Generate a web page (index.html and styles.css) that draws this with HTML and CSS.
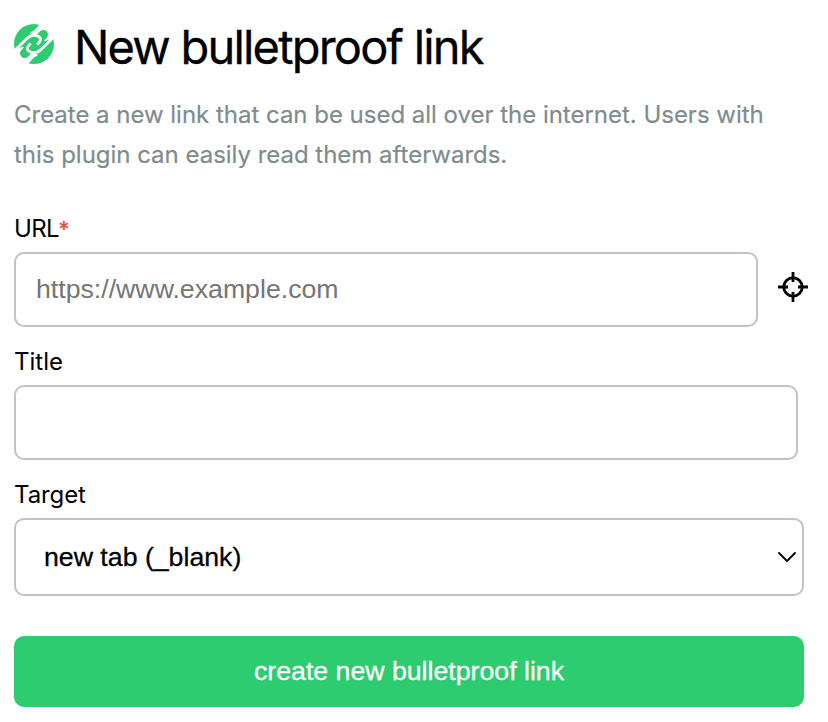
FILE: index.html
```html
<!DOCTYPE html>
<html lang="en">
<head>
<meta charset="utf-8">
<title>New bulletproof link</title>
<link rel="stylesheet" href="styles.css">
</head>
<body>
<main class="popup">
  <header class="header">
    <svg class="logo" viewBox="42 42 120 120" aria-hidden="true">
      <defs><clipPath id="disc"><circle cx="102" cy="102" r="61"/></clipPath></defs>
      <circle cx="102" cy="102" r="60" fill="#2ecc71"/>
      <g clip-path="url(#disc)">
        <g id="gap">
          <path d="M92 66 Q98 66 103 61 Q113 49 122 40 L170 40 L170 72 L155 86 L135 94 L114 76 Q103 71 92 72Z" fill="#fff"/>
          <path d="M130 74 L110 94" fill="none" stroke="#2ecc71" stroke-width="28" stroke-linecap="round"/>
        </g>
        <use href="#gap" transform="rotate(180 102 102)"/>
        <g id="link">
          <path d="M36 130 L80 86 Q92 74 107 76 Q127 81 119 95 L112 104" fill="none" stroke="#fff" stroke-width="8.5"/>
        </g>
        <use href="#link" transform="rotate(180 102 102)"/>
      </g>
    </svg>
    <h1><span>New bulletproof link</span></h1>
  </header>
  <p class="intro">Create a new link that can be used all over the internet. Users with<br>this plugin can easily read them afterwards.</p>
  <form class="form">
    <label for="url"><span class="url-label">URL</span><span class="required">*</span></label>
    <div class="url-row">
      <input id="url" type="text" placeholder="https://www.example.com">
      <svg class="crosshair" viewBox="0 0 30 30" fill="none" stroke="#000" stroke-width="2.8" aria-hidden="true">
        <circle cx="15" cy="15" r="9.2"/>
        <path d="M15 0v10M15 20v10M0 15h10M20 15h10"/>
      </svg>
    </div>
    <label for="title">Title</label>
    <input id="title" class="title-input" type="text">
    <label for="target" class="target-label">Target</label>
    <div class="select" id="target"><span>new tab (_blank)</span>
      <svg class="chevron" viewBox="0 0 18 10" fill="none" stroke="#000" stroke-width="1.8" stroke-linecap="round" stroke-linejoin="round" aria-hidden="true"><path d="M1 1l8 8 8-8"/></svg>
    </div>
    <button type="button"><span>create new bulletproof link</span></button>
  </form>
</main>
</body>
</html>
```
FILE: styles.css
```css
* { box-sizing: border-box; }
body { margin: 0; background: #fff; color: #000; font-family: Inter, "Liberation Sans", sans-serif; }
.popup { width: 828px; height: 722px; padding: 24px 20px 0 14px; overflow: hidden; }
.header { display: flex; height: 48px; }
.logo { width: 40px; height: 40px; margin-right: 20px; }
h1 { margin: 0; font-size: 47px; line-height: 46px; font-weight: 400; letter-spacing: -1.8px; white-space: nowrap; -webkit-text-stroke: 0.3px #000; }
.intro { margin: 23px 0 0; font-size: 24px; line-height: 40px; color: #7f8c8d; letter-spacing: -0.02px; white-space: nowrap; -webkit-text-stroke: 0.2px #7f8c8d; }
.form { margin-top: 39px; }
label { display: block; height: 38px; font-size: 24px; line-height: 30px; }
.url-label { letter-spacing: -0.6px; }
.required { display: inline-block; color: #e74c3c; font-size: 22px; font-weight: 600; line-height: 24px; margin-left: -1px; }
.target-label { letter-spacing: -0.1px; }
.url-row { display: flex; align-items: flex-start; width: 794px; }
input, .select { display: block; height: 75px; margin: 0; padding: 0 20px; border: 2px solid #bdc3c7; border-radius: 10px; background: #fff; outline: 0; font: 26.7px "Liberation Sans", sans-serif; }
input::placeholder { color: #757575; opacity: 1; }
#url { width: 744px; margin-bottom: 20px; }
.title-input { width: 784px; margin-bottom: 20px; }
.crosshair { flex-shrink: 0; width: 30px; height: 30px; margin: 20px 0 0 20px; }
.select { display: flex; width: 790px; height: 78px; align-items: center; justify-content: space-between; padding: 0 6px 0 28px; }
.chevron { width: 18px; height: 10px; }
button { display: block; width: 790px; height: 71px; margin: 40px 0 0; padding: 0; border: 0; border-radius: 10px; background: #2ecc71; color: #fff; font: 26.7px "Liberation Sans", sans-serif; }
.select span { -webkit-text-stroke: 0.3px #000; }
button span { -webkit-text-stroke: 0.3px #fff; }
```
